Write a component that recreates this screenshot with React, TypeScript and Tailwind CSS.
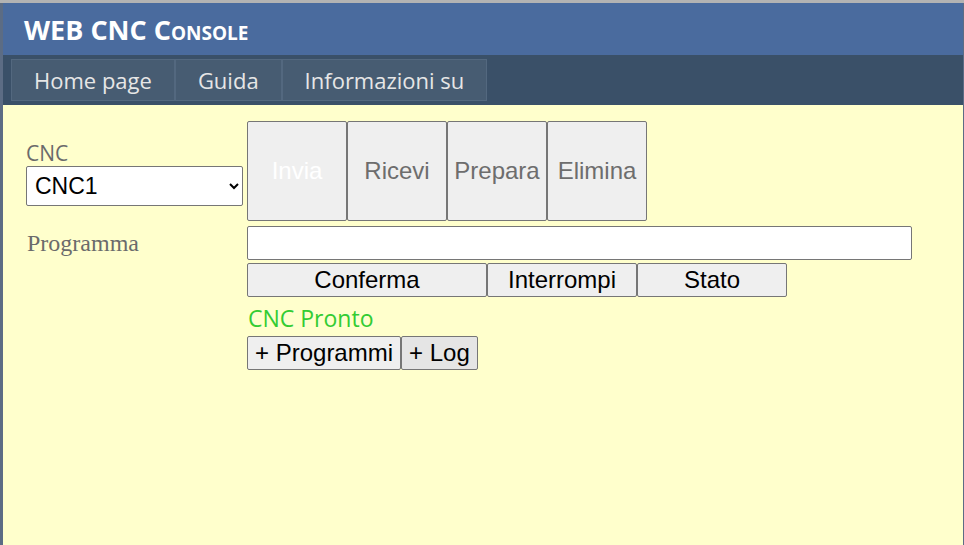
import { useState } from "react";

const tabs = ["Home page", "Guida", "Informazioni su"];

export default function App() {
  const [cnc, setCnc] = useState("CNC1");
  const [prog, setProg] = useState("");

  const bigBtn =
    "w-[100px] h-[100px] bg-[#efefef] border border-[#767676] rounded-[2px] text-[24px] text-[#6d6d6d] font-['Liberation_Sans',Arial,sans-serif]";
  const rowBtn =
    "h-[34px] bg-[#efefef] border border-[#767676] rounded-[2px] text-[24px] text-black font-['Liberation_Sans',Arial,sans-serif] leading-none";

  return (
    <div className="w-[964px] h-[545px] bg-[#b3b3b3] pt-[3px] overflow-hidden">
      <div className="h-full border-l-[3px] border-r border-[#5c6c84] bg-[#ffffcc] flex flex-col">
        {/* header */}
        <div className="h-[52px] bg-[#4a6b9e] flex items-center pl-[21px]">
          <h1 className="text-white font-bold text-[27px] leading-none [font-variant:small-caps] font-['Open_Sans','Noto_Sans',sans-serif]">
            WEB CNC Console
          </h1>
        </div>

        {/* menu */}
        <div className="h-[50px] bg-[#3a5068] flex items-start pt-[4px] pl-[8px]">
          {tabs.map((t) => (
            <div
              key={t}
              className="h-[42px] px-[22px] flex items-center bg-[#475c72] border border-[#53687f] text-[#e6e6e6] text-[22px] font-['Open_Sans','Noto_Sans',sans-serif]"
            >
              {t}
            </div>
          ))}
        </div>

        {/* content */}
        <div className="pt-[16px] pl-[23px] grid grid-cols-[217px_auto] gap-x-[4px] gap-y-[4px] items-center w-fit">
          <div className="flex flex-col pt-[4px]">
            <span className="text-[#6b6b6b] text-[21px] leading-[26px] font-['Open_Sans','Noto_Sans',sans-serif]">CNC</span>
            <select
              value={cnc}
              onChange={(e) => setCnc(e.target.value)}
              className="h-[40px] w-[217px] bg-white border border-[#767676] rounded-[2px] text-[23px] text-black pl-[4px] font-['Liberation_Sans',Arial,sans-serif]"
            >
              <option>CNC1</option>
              <option>CNC2</option>
            </select>
          </div>
          <div className="flex">
            <button className={bigBtn + " !text-white"} disabled>
              Invia
            </button>
            <button className={bigBtn}>Ricevi</button>
            <button className={bigBtn}>Prepara</button>
            <button className={bigBtn}>Elimina</button>
          </div>

          <span className="text-[#6b6b6b] text-[24px] font-['Liberation_Serif','Times_New_Roman',serif] pl-[1px]">
            Programma
          </span>
          <input
            value={prog}
            onChange={(e) => setProg(e.target.value)}
            className="h-[34px] w-[665px] bg-white border border-[#767676] rounded-[2px] outline-none -mt-[1px]"
          />

          <div />
          <div className="flex -mt-[2px]">
            <button className={rowBtn + " w-[240px]"}>Conferma</button>
            <button className={rowBtn + " w-[150px]"}>Interrompi</button>
            <button className={rowBtn + " w-[150px]"}>Stato</button>
          </div>

          <div />
          <div className="flex flex-col -mt-[1px]">
            <span className="text-[#33cc33] text-[23px] leading-[36px] pl-[1px] font-['Open_Sans','Noto_Sans',sans-serif]">
              CNC Pronto
            </span>
            <div className="flex">
              <button className={rowBtn + " px-[7px]"}>+ Programmi</button>
              <button className={rowBtn + " px-[7px] !bg-[#e5e5e5]"}>+ Log</button>
            </div>
          </div>
        </div>
      </div>
    </div>
  );
}
